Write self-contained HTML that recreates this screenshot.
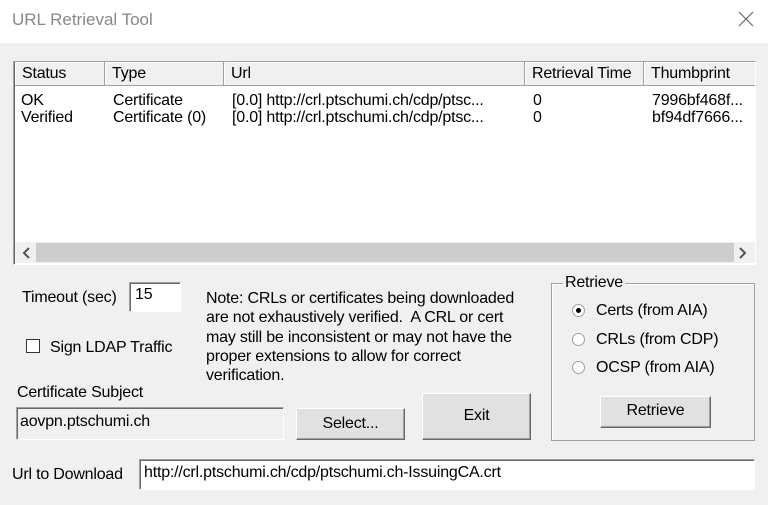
<!DOCTYPE html>
<html><head><style>
*{box-sizing:border-box;margin:0;padding:0}
body{width:768px;height:505px;background:#f0f0f0;font-family:"Liberation Sans",sans-serif;font-size:16px;color:#000;position:relative;overflow:hidden;letter-spacing:-0.2px}
.a{position:absolute;white-space:nowrap}
.title{left:0;top:0;width:768px;height:43px;background:#fff}
.sunk{border:1px solid;border-color:#a0a0a0 #fff #fff #a0a0a0;box-shadow:inset 1px 1px 0 #696969}
.btn{position:absolute;background:#e1e1e1;border:1px solid;border-color:#fff #696969 #696969 #fff;box-shadow:inset -1px -1px 0 #a0a0a0;text-align:center}
.hd{position:absolute;top:0;height:24px;border-right:1px solid #a0a0a0;border-bottom:1px solid #a0a0a0;background:#f0f0f0;padding:3px 0 0 7px;box-shadow:inset 1px 1px 0 #fff}
.radio{position:absolute;width:13px;height:13px;border-radius:50%;background:#fff;border:1px solid #a0a0a0}
</style></head><body>
<div class="a title"></div>
<div class="a" style="left:12px;top:10px;font-size:17px;color:#888;letter-spacing:0">URL Retrieval Tool</div>
<svg class="a" style="left:738px;top:11px" width="16" height="16"><path d="M1 1L15 15M15 1L1 15" stroke="#666" stroke-width="1.2"/></svg>

<div class="a sunk" style="left:13px;top:61px;width:743px;height:204px;background:#fff">
 <div class="hd" style="left:1px;width:90px">Status</div>
 <div class="hd" style="left:91px;width:119px">Type</div>
 <div class="hd" style="left:210px;width:301px">Url</div>
 <div class="hd" style="left:511px;width:119px">Retrieval Time</div>
 <div class="hd" style="left:630px;width:111px;border-right:none">Thumbprint</div>
 <div class="a" style="left:7px;top:30px;line-height:17px">OK<br>Verified</div>
 <div class="a" style="left:99px;top:30px;line-height:17px">Certificate<br>Certificate (0)</div>
 <div class="a" style="left:218px;top:30px;line-height:17px">[0.0] http://crl.ptschumi.ch/cdp/ptsc...<br>[0.0] http://crl.ptschumi.ch/cdp/ptsc...</div>
 <div class="a" style="left:519px;top:30px;line-height:17px">0<br>0</div>
 <div class="a" style="left:638px;top:30px;line-height:17px">7996bf468f...<br>bf94df7666...</div>
 <div class="a" style="left:1px;top:180px;width:740px;height:21px;background:#f0f0f0"></div>
 <div class="a" style="left:22px;top:181px;width:698px;height:19px;background:#cdcdcd"></div>
 <svg class="a" style="left:8px;top:185px" width="10" height="12"><path d="M7 1L2 6L7 11" stroke="#555" stroke-width="2" fill="none"/></svg>
 <svg class="a" style="left:724px;top:185px" width="10" height="12"><path d="M2 1L7 6L2 11" stroke="#555" stroke-width="2" fill="none"/></svg>
</div>

<div class="a" style="left:22px;top:289px">Timeout (sec)</div>
<div class="a sunk" style="left:129px;top:282px;width:52px;height:30px;background:#fff;padding:3px 0 0 5px">15</div>
<div class="a" style="left:26px;top:339px;width:14px;height:14px;background:#fff;border:1px solid #333"></div>
<div class="a" style="left:50px;top:339px">Sign LDAP Traffic</div>
<div class="a" style="left:206px;top:289px;line-height:19.3px">Note: CRLs or certificates being downloaded<br>are not exhaustively verified.&nbsp; A CRL or cert<br>may still be inconsistent or may not have the<br>proper extensions to allow for correct<br>verification.</div>
<div class="a" style="left:17px;top:384px">Certificate Subject</div>
<div class="a sunk" style="left:16px;top:407px;width:268px;height:33px;padding:5px 0 0 3px">aovpn.ptschumi.ch</div>
<div class="btn" style="left:296px;top:408px;width:109px;height:32px;padding-top:6px">Select...</div>
<div class="btn" style="left:422px;top:393px;width:109px;height:47px;padding-top:13px">Exit</div>

<div class="a" style="left:551px;top:283px;width:204px;height:158px;border:1px solid #a0a0a0;box-shadow:inset 1px 1px 0 #fff"></div>
<div class="a" style="left:563px;top:274px;background:#f0f0f0;padding:0 2px">Retrieve</div>
<div class="radio" style="left:572px;top:304px"></div><div class="a" style="left:576px;top:308px;width:5px;height:5px;border-radius:50%;background:#000"></div>
<div class="radio" style="left:572px;top:333px"></div>
<div class="radio" style="left:572px;top:361px"></div>
<div class="a" style="left:596px;top:302px">Certs (from AIA)</div>
<div class="a" style="left:596px;top:331px">CRLs (from CDP)</div>
<div class="a" style="left:596px;top:359px">OCSP (from AIA)</div>
<div class="btn" style="left:600px;top:396px;width:111px;height:32px;padding-top:5px">Retrieve</div>

<div class="a" style="left:12px;top:466px">Url to Download</div>
<div class="a sunk" style="left:139px;top:459px;width:616px;height:31px;background:#fff;padding:4px 0 0 4px">http://crl.ptschumi.ch/cdp/ptschumi.ch-IssuingCA.crt</div>
</body></html>
